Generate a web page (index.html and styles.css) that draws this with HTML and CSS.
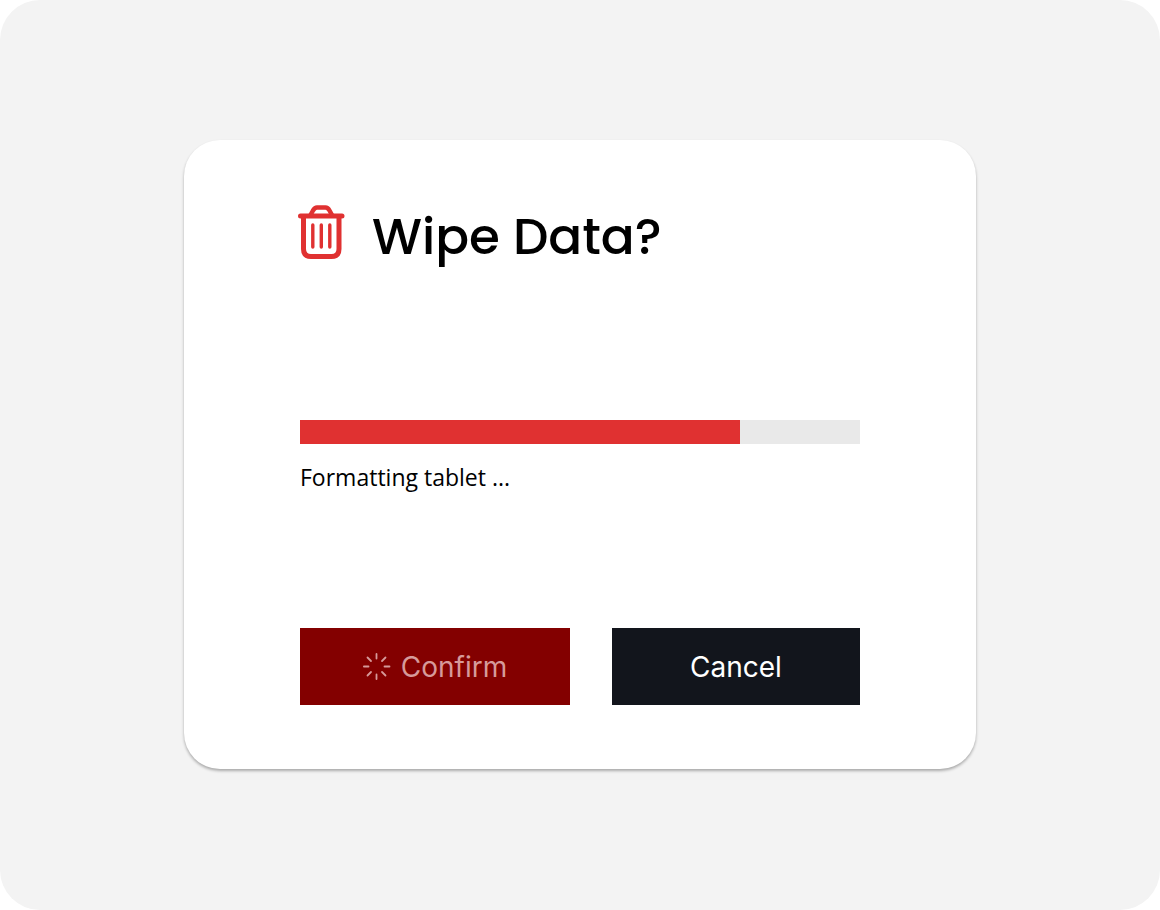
FILE: index.html
```html
<!DOCTYPE html>
<html lang="en">
<head>
    <meta charset="UTF-8">
    <meta name="viewport" content="width=device-width, initial-scale=1.0">
    <title>Wipe Data</title>
    <link rel="stylesheet" href="styles.css">
</head>
<body>
    <main class="screen">
        <section class="dialog" role="dialog" aria-labelledby="dialog-title">
            <header class="dialog-header">
                <svg class="trash-icon" viewBox="0 0 48 56" fill="none" stroke="currentColor" stroke-linecap="round" stroke-linejoin="round" aria-hidden="true">
                    <path stroke-width="5" d="M2.500 12H44M5.500 12V45Q5.500 52.500 13 52.500H33.500Q41 52.500 41 45V12"/>
                    <path stroke-width="4.500" d="M12.500 11L15 6.500Q16.800 3.500 19 3.500H27.500Q29.800 3.500 31.500 6.500L34 11"/>
                    <path stroke-width="3.400" d="M14.800 21V43M23.300 21V43M31.800 21V43"/>
                </svg>
                <h1 class="dialog-title" id="dialog-title">Wipe Data?</h1>
            </header>

            <!-- Progress -->
            <div class="progress">
                <div class="progress-track" role="progressbar" aria-valuenow="440" aria-valuemin="0" aria-valuemax="560" aria-labelledby="progress-label">
                    <div class="progress-fill" style="width: 78.57%"></div>
                </div>
                <p class="progress-label" id="progress-label">Formatting tablet ...</p>
            </div>

            <!-- Actions -->
            <div class="actions">
                <button type="button" class="btn btn-confirm" disabled>
                    <svg class="spinner" viewBox="0 0 28 28" fill="none" stroke="currentColor" stroke-width="1.800" stroke-linecap="round" aria-hidden="true">
                        <path d="M13.500 1V5.500M13.500 21.500V26M0.900 13.500H5.500M21.500 13.500H26.500M4.500 4.500L8 8M19 19L22.500 22.500M4.500 22.500L8 19M19 8L22.500 4.500"/>
                    </svg>
                    Confirm
                </button>
                <button type="button" class="btn btn-cancel">Cancel</button>
            </div>
        </section>
    </main>
</body>
</html>
```

FILE: styles.css
```css
* {
    box-sizing: border-box;
}
body {
    margin: 0;
    background-color: #ffffff;
    color: #000000;
}
.screen {
    min-height: 100vh;
    padding-bottom: 2px;
    display: flex;
    align-items: center;
    justify-content: center;
    background-color: #f3f3f3;
    border-radius: 40px;
}
.dialog {
    width: 792px;
    max-width: 100%;
    padding: 64px 116px;
    background-color: #ffffff;
    border-radius: 36px;
    box-shadow: 0 2px 3px rgba(0, 0, 0, 0.3);
}
.dialog-header {
    display: flex;
    align-items: flex-start;
    gap: 26px;
    margin-left: -2px;
}
.trash-icon {
    width: 48px;
    height: 56px;
    color: #e03131;
}
.dialog-title {
    margin: 0;
    font-family: Poppins, Inter, sans-serif;
    font-size: 50px;
    font-weight: 500;
    line-height: 66px;
}
.progress {
    margin-top: 150px;
}
.progress-track {
    height: 24px;
    background-color: #e9e9e9;
}
.progress-fill {
    height: 100%;
    background-color: #e03131;
}
.progress-label {
    margin: 16px 0 0;
    font-family: "Segoe UI", "Open Sans", sans-serif;
    font-size: 23px;
    line-height: 34px;
}
.actions {
    display: flex;
    gap: 42px;
    margin-top: 134px;
}
.btn {
    display: flex;
    align-items: center;
    justify-content: center;
    gap: 10px;
    height: 77px;
    padding: 2px 0 0;
    border: none;
    font-family: Inter, sans-serif;
    font-size: 28px;
    cursor: pointer;
}
.btn-confirm {
    flex: 270;
    background-color: #830000;
    color: #d69a9a;
    cursor: default;
}
.btn-cancel {
    flex: 248;
    background-color: #12151c;
    color: #ffffff;
}
.spinner {
    width: 28px;
    height: 28px;
}
```
